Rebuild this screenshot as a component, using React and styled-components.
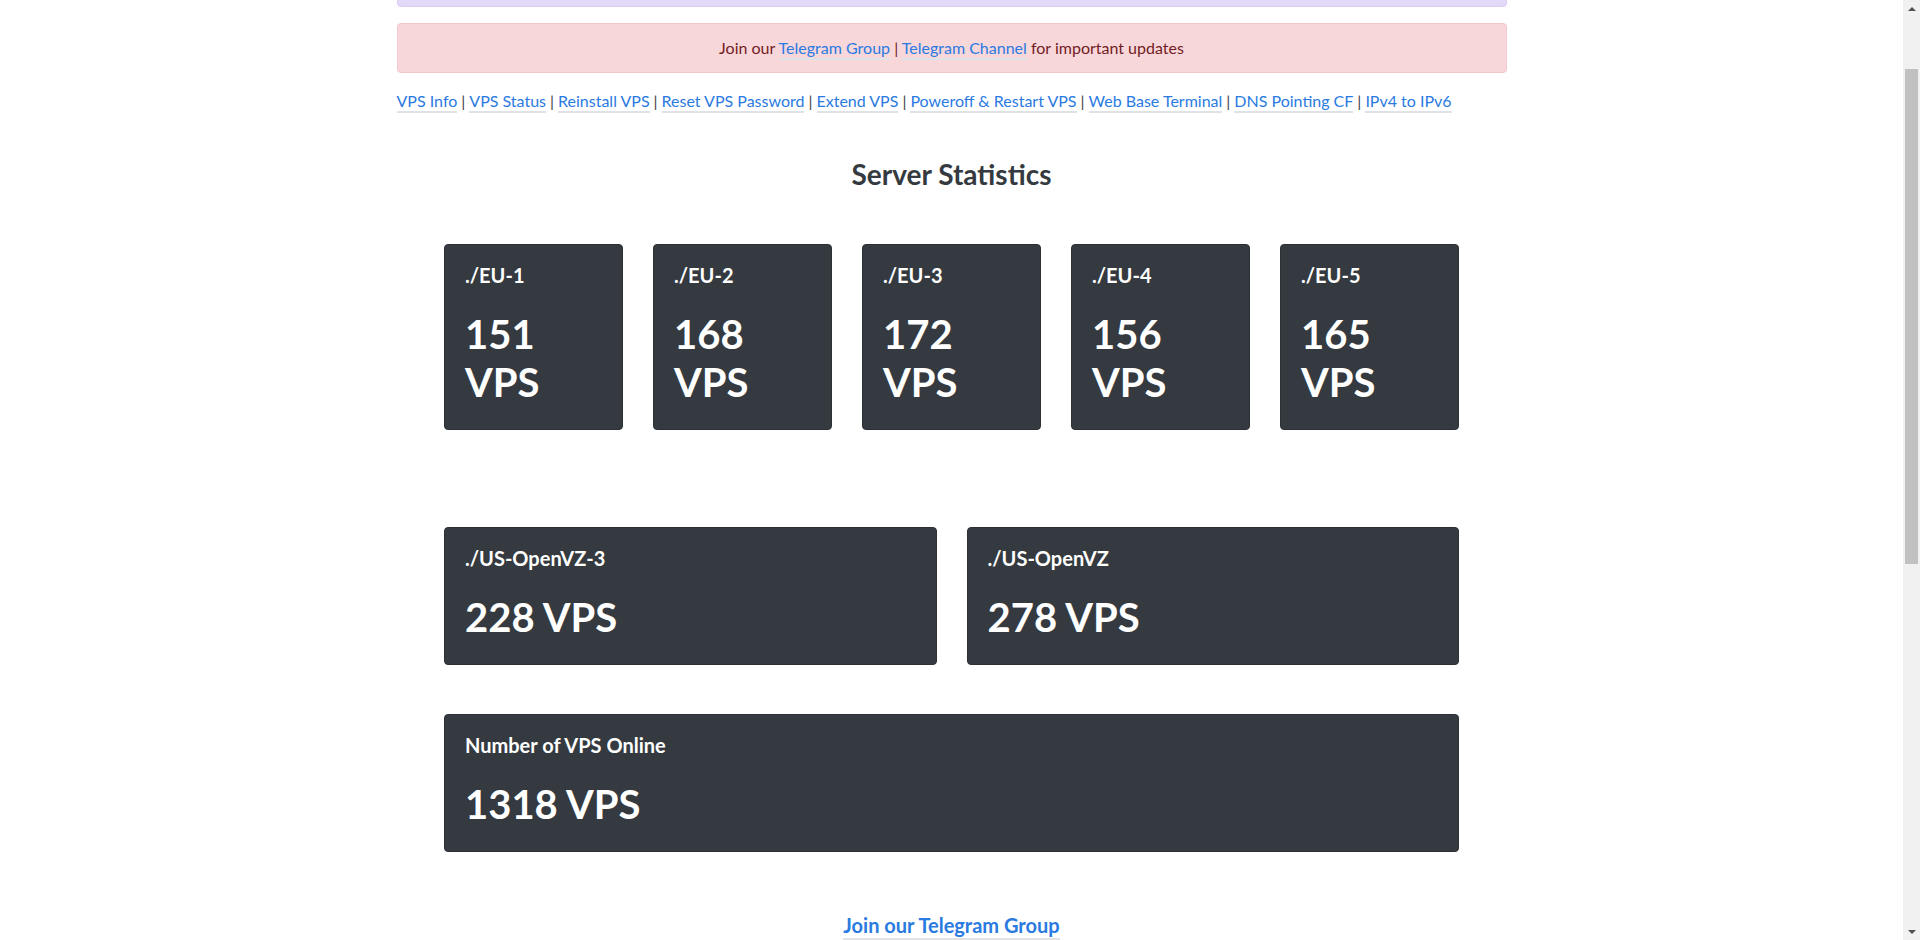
import React, { useLayoutEffect } from "react";
import styled, { createGlobalStyle } from "styled-components";

const GlobalStyle = createGlobalStyle`
  html, body { margin: 0; padding: 0; }
  html { scrollbar-width: none; }
  ::-webkit-scrollbar { width: 0; height: 0; }
  body {
    font-family: Lato, "Open Sans", "Liberation Sans", sans-serif;
    font-size: 16px;
    line-height: 1.5;
    color: #212529;
    background: #fff;
  }
  *, *::before, *::after { box-sizing: border-box; }
`;

const Page = styled.div`
  min-height: 1721px;
  padding-top: 56px;
  padding-right: 17px;
`;

const Container = styled.div`
  width: 1140px;
  margin: 0 auto;
  padding: 0 15px;
`;

const Alert = styled.div`
  border: 1px solid ${(p) => p.$border};
  background: ${(p) => p.$bg};
  color: ${(p) => p.$color};
  border-radius: 4px;
  padding: 12px 20px;
  margin-bottom: 16px;
  text-align: center;
  line-height: 24px;
  min-height: 50px;
`;

const Link = styled.a`
  color: #2a7ae2;
  text-decoration: none;
  border-bottom: 2px solid #dfe2e6;
  padding-bottom: 1px;
  cursor: pointer;
`;

const NavLinks = styled.p`
  margin: 0 0 16px;
  line-height: 24px;
  color: #444;
`;

const Sep = styled.span`
  margin: 0 4px;
  color: #444;
`;

const Title = styled.h3`
  margin: 44px 0 0;
  text-align: center;
  font-size: 28px;
  font-weight: 700;
  line-height: 34px;
  color: #343a40;
`;

const Stats = styled.div`
  width: 1015px;
  margin: 53px auto 0;
  display: flex;
  flex-direction: column;
`;

const Grid = styled.div`
  display: grid;
  grid-template-columns: repeat(${(p) => p.$cols}, 1fr);
  gap: 30px;
  margin-top: ${(p) => p.$mt || 0}px;
`;

const Card = styled.div`
  background: #343a40;
  border: 1px solid #2b3035;
  border-radius: 4px;
  color: #fff;
  padding: 18px 20px 20px;
`;

const CardLabel = styled.div`
  font-size: 20px;
  font-weight: 700;
  line-height: 24px;
  margin-bottom: 23px;
`;

const CardValue = styled.div`
  font-size: 40px;
  font-weight: 700;
  line-height: 48px;
  margin-bottom: 3px;
`;

const Footer = styled.div`
  margin-top: 61px;
  text-align: center;
  font-size: 20px;
  font-weight: 700;
  line-height: 24px;
`;

/* Window scrollbar drawn as an overlay on the right edge */
const ScrollTrack = styled.div`
  position: fixed;
  top: 0;
  right: 0;
  width: 17px;
  height: 100vh;
  background: #f1f1f1;
  display: flex;
  flex-direction: column;
  z-index: 10;
`;

const ScrollButton = styled.div`
  height: 17px;
  display: flex;
  align-items: center;
  justify-content: center;
  flex: none;
`;

const ScrollArea = styled.div`
  flex: 1;
  padding-top: 52px;
`;

const ScrollThumb = styled.div`
  height: 495px;
  margin: 0 2px;
  background: #c1c1c1;
`;

const eu = [
  ["./EU-1", 151],
  ["./EU-2", 168],
  ["./EU-3", 172],
  ["./EU-4", 156],
  ["./EU-5", 165],
];

const us = [
  ["./US-OpenVZ-3", 228],
  ["./US-OpenVZ", 278],
];

const navItems = [
  "VPS Info",
  "VPS Status",
  "Reinstall VPS",
  "Reset VPS Password",
  "Extend VPS",
  "Poweroff & Restart VPS",
  "Web Base Terminal",
  "DNS Pointing CF",
  "IPv4 to IPv6",
];

function StatCard({ label, value }) {
  return (
    <Card>
      <CardLabel>{label}</CardLabel>
      <CardValue>{value} VPS</CardValue>
    </Card>
  );
}

function Scrollbar() {
  return (
    <ScrollTrack aria-hidden="true">
      <ScrollButton>
        <svg width="8" height="4" viewBox="0 0 8 4">
          <path d="M0 4 L4 0 L8 4 Z" fill="#505050" />
        </svg>
      </ScrollButton>
      <ScrollArea>
        <ScrollThumb />
      </ScrollArea>
      <ScrollButton>
        <svg width="8" height="4" viewBox="0 0 8 4">
          <path d="M0 0 L8 0 L4 4 Z" fill="#505050" />
        </svg>
      </ScrollButton>
    </ScrollTrack>
  );
}

export default function App() {
  useLayoutEffect(() => {
    window.scrollTo(0, 99);
  }, []);

  return (
    <Page>
      <GlobalStyle />
      <Container>
        <Alert $bg="#e4d8f8" $border="#dacbf3" $color="#3d2a63" />
        <Alert $bg="#f8d7da" $border="#f5c6cb" $color="#721c24">
          Join our <Link>Telegram Group</Link> | <Link>Telegram Channel</Link>{" "}
          for important updates
        </Alert>
        <NavLinks>
          {navItems.map((item, i) => (
            <React.Fragment key={item}>
              {i > 0 && <Sep>|</Sep>}
              <Link>{item}</Link>
            </React.Fragment>
          ))}
        </NavLinks>
        <Title>Server Statistics</Title>
        <Stats>
          <Grid $cols={5}>
            {eu.map(([l, v]) => (
              <StatCard key={l} label={l} value={v} />
            ))}
          </Grid>
          <Grid $cols={2} $mt={97}>
            {us.map(([l, v]) => (
              <StatCard key={l} label={l} value={v} />
            ))}
          </Grid>
          <Grid $cols={1} $mt={49}>
            <StatCard label="Number of VPS Online" value={1318} />
          </Grid>
        </Stats>
        <Footer>
          <Link>Join our Telegram Group</Link>
        </Footer>
      </Container>
      <Scrollbar />
    </Page>
  );
}
